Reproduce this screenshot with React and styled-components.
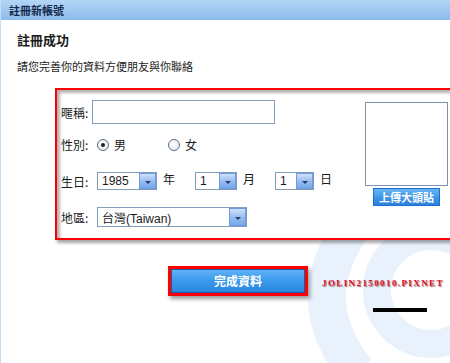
import React from 'react';
import styled, { createGlobalStyle } from 'styled-components';

const Global = createGlobalStyle`
    body{
        margin:0;
        background:#ffffff;
        font-family:"Noto Sans CJK TC", "Liberation Sans", sans-serif;
        color:#1b1b1b;
    }
`;

const App = () => {
    return (
        <Page>
            <Global />
            <Swirl width="450" height="363" viewBox="0 0 450 363">
                <path d="M352 226 Q298 300 356 372" stroke="#e9f2fc" strokeWidth="38" fill="none" />
                <circle cx="430" cy="290" r="54" stroke="#e9f2fc" strokeWidth="28" fill="none" />
            </Swirl>
            <Header>註冊新帳號</Header>
            <Body>
                <Title>註冊成功</Title>
                <Hint>請您完善你的資料方便朋友與你聯絡</Hint>
                <Frame>
                    <Form>
                        <Row $top={10}>
                            <Label $w={31}>暱稱:</Label>
                            <TextInput />
                        </Row>
                        <Row $top={12}>
                            <Label>性別:</Label>
                            <Radio $checked />
                            <Option>男</Option>
                            <Radio />
                            <Option>女</Option>
                        </Row>
                        <Row $top={17}>
                            <Label>生日:</Label>
                            <Select $w={60}><span>1985</span><Drop /></Select>
                            <Unit>年</Unit>
                            <Select $w={42}><span>1</span><Drop /></Select>
                            <Unit>月</Unit>
                            <Select $w={39}><span>1</span><Drop /></Select>
                            <Unit>日</Unit>
                        </Row>
                        <Row $top={15}>
                            <Label>地區:</Label>
                            <Select $w={150} $h={20}><span>台灣(Taiwan)</span><Drop /></Select>
                        </Row>
                    </Form>
                    <AvatarCol>
                        <Avatar />
                        <UploadButton>上傳大頭貼</UploadButton>
                    </AvatarCol>
                </Frame>
                <Submit>完成資料</Submit>
            </Body>
            <Watermark>JOLIN2150010.PIXNET</Watermark>
            <Bar />
        </Page>
    );
};

const Page = styled.div`
    position:relative;
    width:450px;
    height:363px;
    overflow:hidden;
    box-sizing:border-box;
    border-left:1px solid #c6dcf3;
`;

const Swirl = styled.svg`
    position:absolute;
    left:0;
    top:0;
    z-index:0;
`;

const Header = styled.div`
    position:relative;
    height:20px;
    line-height:20px;
    padding-left:8px;
    font-size:11px;
    font-weight:bold;
    color:#15284a;
    background:linear-gradient(#b4d6f6, #8dbbea);
`;

const Body = styled.div`
    position:relative;
    z-index:1;
    padding-left:16px;
`;

const Title = styled.div`
    margin-top:11px;
    font-size:13px;
    font-weight:bold;
    line-height:18px;
`;

const Hint = styled.div`
    margin-top:9px;
    font-size:11px;
    line-height:16px;
`;

const Frame = styled.div`
    display:flex;
    margin-top:14px;
    margin-left:38px;
    width:400px;
    border:2px solid #ff0000;
    background:#ffffff;
    box-shadow:inset 3px 3px 3px rgba(0,0,0,0.3), 2px 3px 3px rgba(0,0,0,0.35);
`;

const Form = styled.div`
    display:flex;
    flex-direction:column;
    width:304px;
    padding:0 0 11px 4px;
`;

const Row = styled.div`
    display:flex;
    align-items:center;
    margin-top:${p => p.$top}px;
    font-size:12px;
`;

const Label = styled.div`
    width:${p => p.$w || 36}px;
    flex-shrink:0;
    font-size:12px;
`;

const TextInput = styled.div`
    width:183px;
    height:24px;
    box-sizing:border-box;
    border:1px solid #7f9db9;
    background:#fff;
`;

const Radio = styled.div`
    width:12px;
    height:12px;
    box-sizing:border-box;
    border-radius:50%;
    border:1px solid #5d6f86;
    background:radial-gradient(circle at 40% 40%, #ffffff, #dfe3e8);
    margin-right:5px;
    display:flex;
    align-items:center;
    justify-content:center;
    &::after{
        content:'';
        width:4px;
        height:4px;
        border-radius:50%;
        background:${p => p.$checked ? '#222' : 'transparent'};
    }
`;

const Option = styled.span`
    width:54px;
    font-size:12px;
`;

const Select = styled.div`
    display:flex;
    width:${p => p.$w}px;
    height:${p => p.$h || 18}px;
    box-sizing:border-box;
    border:1px solid #7f9db9;
    background:#fff;
    font-size:12px;
    span{
        flex:1;
        padding-left:4px;
        display:flex;
        align-items:center;
        white-space:nowrap;
        font-family:"Liberation Sans", "Noto Sans CJK TC", sans-serif;
    }
`;

const Drop = styled.div`
    width:17px;
    box-sizing:border-box;
    border:1px solid #6f9ade;
    background:linear-gradient(#cfe1fa, #93bbf0 55%, #78a7ea);
    display:flex;
    align-items:center;
    justify-content:center;
    &::after{
        content:'';
        border-left:3px solid transparent;
        border-right:3px solid transparent;
        border-top:3px solid #233d6b;
        margin-top:2px;
    }
`;

const Unit = styled.span`
    font-size:12px;
    margin:0 0 5px 6px;
    width:32px;
`;

const AvatarCol = styled.div`
    display:flex;
    flex-direction:column;
    align-items:center;
    width:83px;
    padding-top:12px;
`;

const Avatar = styled.div`
    width:83px;
    height:84px;
    box-sizing:border-box;
    border:1px solid #7f92aa;
    background:#fff;
`;

const UploadButton = styled.div`
    margin-top:2px;
    width:67px;
    height:18px;
    box-sizing:border-box;
    border:1px solid #1c6fd0;
    background:linear-gradient(#68b5f6, #3a91e6 60%, #2e82dc);
    color:#fff;
    font-size:11px;
    font-weight:bold;
    line-height:16px;
    text-align:center;
`;

const Submit = styled.div`
    margin:26px 0 0 151px;
    width:140px;
    height:30px;
    box-sizing:border-box;
    border:3px solid #ff0000;
    box-shadow:inset 0 0 0 1px #1d58a8, 2px 3px 4px rgba(0,0,0,0.4);
    background:linear-gradient(#62b4f7, #3796ea 55%, #2c86de);
    color:#fff;
    font-size:12px;
    font-weight:bold;
    line-height:24px;
    text-align:center;
`;

const Watermark = styled.div`
    position:absolute;
    left:321px;
    top:278px;
    z-index:2;
    font-family:"Liberation Serif", serif;
    font-size:9px;
    font-weight:bold;
    letter-spacing:1.4px;
    color:#e0102a;
    text-shadow:1px 1px 1px rgba(60,0,0,0.55);
    white-space:nowrap;
`;

const Bar = styled.div`
    position:absolute;
    left:372px;
    top:308px;
    width:54px;
    height:4px;
    background:#000;
    z-index:2;
`;

export default App;
